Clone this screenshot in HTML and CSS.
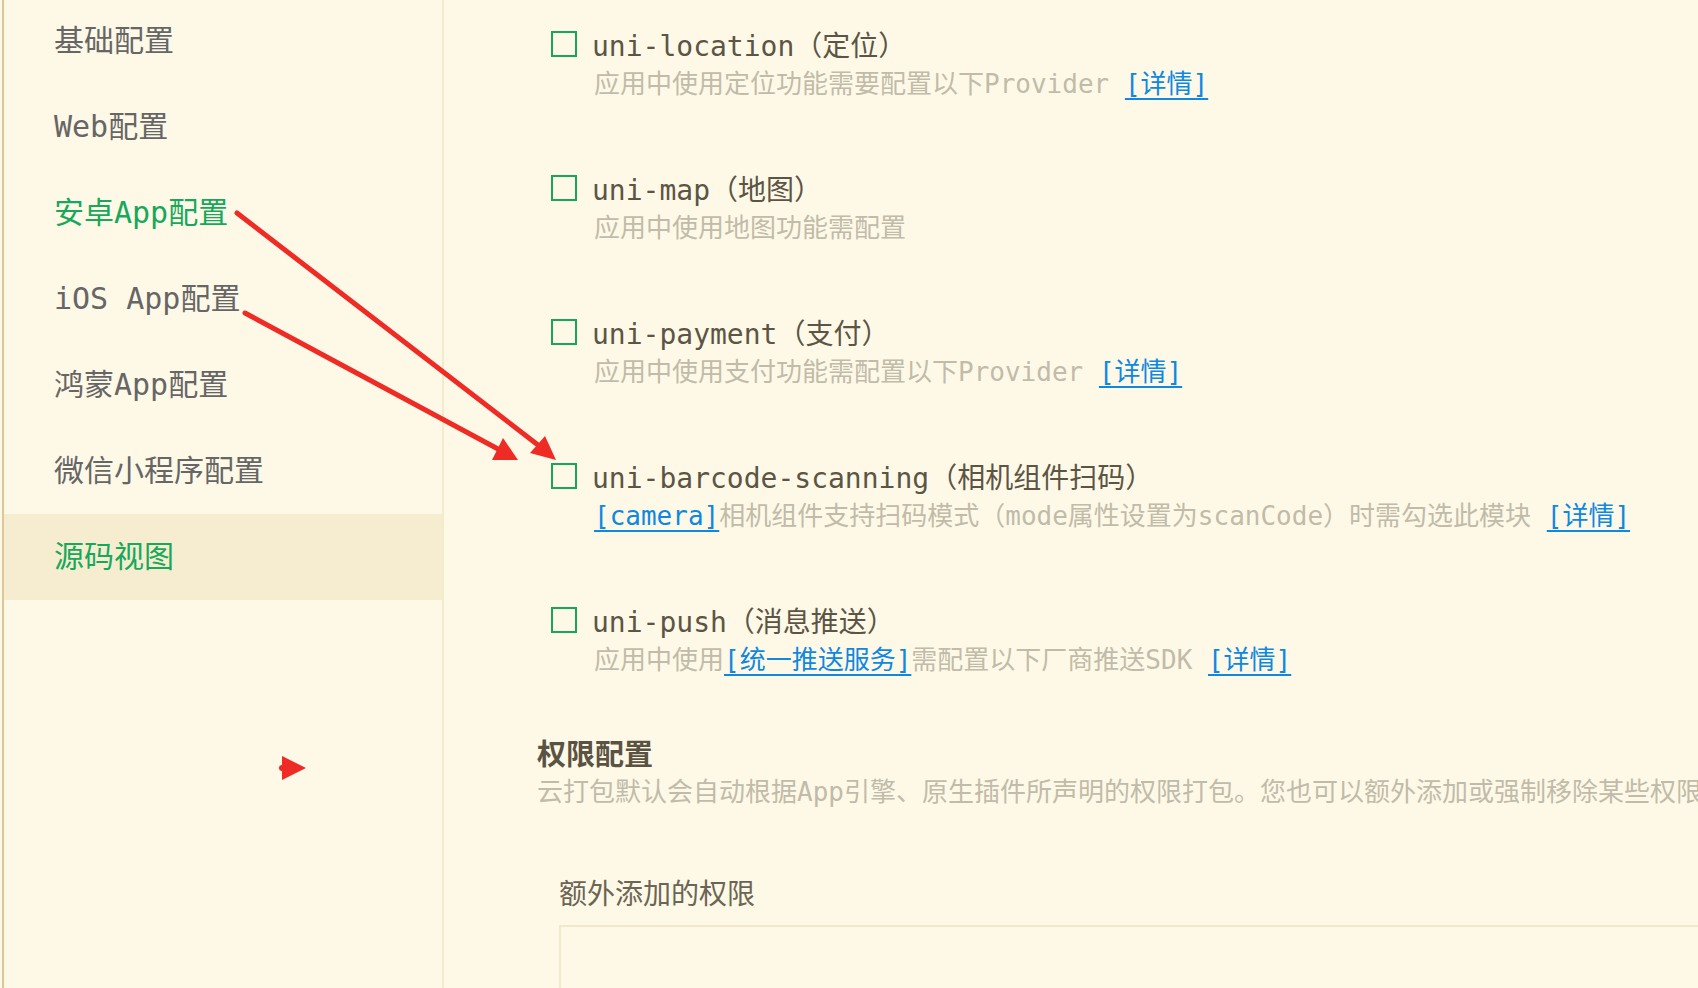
FILE: index.html
```html
<!DOCTYPE html>
<html lang="zh-CN">
  <head>
    <meta charset="UTF-8" />
    <meta name="viewport" content="width=device-width, initial-scale=1.0" />
    <title>manifest.json</title>
    <link rel="stylesheet" href="styles.css">
  </head>
  <body>
    <div class="page">
      <aside class="sidebar">
        <ul class="nav">
          <li class="nav_item">基础配置</li>
          <li class="nav_item">Web配置</li>
          <li class="nav_item current">安卓App配置</li>
          <li class="nav_item">iOS App配置</li>
          <li class="nav_item">鸿蒙App配置</li>
          <li class="nav_item">微信小程序配置</li>
          <li class="nav_item current active">源码视图</li>
        </ul>
      </aside>

      <main class="content">
        <ul class="modules">
          <li class="module">
            <label class="module_head">
              <span class="check"></span>
              <span class="module_name">uni-location（定位）</span>
            </label>
            <p class="module_desc">应用中使用定位功能需要配置以下Provider <a class="link">[详情]</a></p>
          </li>
          <li class="module">
            <label class="module_head">
              <span class="check"></span>
              <span class="module_name">uni-map（地图）</span>
            </label>
            <p class="module_desc">应用中使用地图功能需配置</p>
          </li>
          <li class="module">
            <label class="module_head">
              <span class="check"></span>
              <span class="module_name">uni-payment（支付）</span>
            </label>
            <p class="module_desc">应用中使用支付功能需配置以下Provider <a class="link">[详情]</a></p>
          </li>
          <li class="module">
            <label class="module_head">
              <span class="check"></span>
              <span class="module_name">uni-barcode-scanning（相机组件扫码）</span>
            </label>
            <p class="module_desc"><a class="link">[camera]</a>相机组件支持扫码模式（mode属性设置为scanCode）时需勾选此模块 <a class="link">[详情]</a></p>
          </li>
          <li class="module">
            <label class="module_head">
              <span class="check"></span>
              <span class="module_name">uni-push（消息推送）</span>
            </label>
            <p class="module_desc">应用中使用<a class="link">[统一推送服务]</a>需配置以下厂商推送SDK <a class="link">[详情]</a></p>
          </li>
        </ul>

        <h3 class="section_title">权限配置</h3>
        <p class="section_desc">云打包默认会自动根据App引擎、原生插件所声明的权限打包。您也可以额外添加或强制移除某些权限。</p>

        <p class="field_label">额外添加的权限</p>
        <div class="field_box"></div>
      </main>
    </div>

    <!-- annotation arrows drawn over the page -->
    <svg class="marks" width="1698" height="988" viewBox="0 0 1698 988">
      <g stroke="#ef2b25" stroke-width="5" stroke-linecap="round" fill="none">
        <line x1="237" y1="213" x2="538" y2="445" />
        <line x1="245" y1="313" x2="498" y2="449" />
      </g>
      <g fill="#ef2b25">
        <polygon points="530,453 545,436 556,460" />
        <polygon points="492,460 503,438 518,460" />
        <polygon points="282,756 306,768 282,780" />
        <circle cx="282" cy="768" r="3" />
      </g>
    </svg>
  </body>
</html>
```

FILE: styles.css
```css
html,
body,
div,
p,
h3,
ul,
li,
a,
label,
span,
aside,
main {
  margin: 0;
  padding: 0;
  border: 0;
  font-size: 100%;
  font-weight: normal;
}

li {
  list-style: none;
}

html,
body {
  width: 100%;
  height: 100%;
}

body {
  position: relative;
  overflow: hidden;
  background: #fef9e7;
  font-family: "DejaVu Sans Mono", "Noto Sans CJK SC", monospace;
  color: #5c5545;
  -webkit-text-size-adjust: none;
}

.page {
  display: flex;
  height: 100%;
}

/* left menu */
.sidebar {
  flex: none;
  width: 438px;
  margin-left: 2px;
  border-left: 2px solid #dcc896;
  border-right: 2px solid #f4ebcd;
  overflow: hidden;
}
.nav {
  margin-top: -2px;
}
.nav_item {
  height: 86px;
  line-height: 86px;
  padding-left: 50px;
  font-size: 30px;
  color: #666;
  white-space: nowrap;
}
.nav_item.current {
  color: #17a85b;
}
.nav_item.active {
  background: #f6edd1;
}

/* right panel */
.content {
  flex: 1;
  min-width: 0;
  overflow: hidden;
  padding: 24px 0 0 93px;
}
.modules {
  display: flex;
  flex-direction: column;
  gap: 64px;
  padding-left: 14px;
}
.module_head {
  display: flex;
  align-items: center;
  gap: 15px;
  height: 40px;
  font-size: 28px;
  white-space: nowrap;
}
.check {
  flex: none;
  width: 22px;
  height: 22px;
  border: 2px solid #17a65a;
}
.module_desc {
  margin-left: 43px;
  line-height: 40px;
  font-size: 26px;
  color: #c1bba9;
  white-space: nowrap;
}
.link {
  color: #0e88e0;
  text-decoration: underline;
  text-decoration-thickness: 2px;
  text-underline-offset: 5px;
}

.section_title {
  margin-top: 52px;
  line-height: 40px;
  font-size: 29px;
  font-weight: bold;
  color: #5a5343;
  font-family: "Noto Sans CJK SC", sans-serif;
}
.section_desc {
  line-height: 40px;
  font-size: 26px;
  color: #c1bba9;
  white-space: nowrap;
}
.field_label {
  margin: 63px 0 0 22px;
  line-height: 40px;
  font-size: 28px;
  color: #6b6555;
}
.field_box {
  width: 1400px;
  height: 200px;
  margin: 10px 0 0 22px;
  border: 2px solid #f3e9c8;
}

.marks {
  position: absolute;
  top: 0;
  left: 0;
  pointer-events: none;
}
```
